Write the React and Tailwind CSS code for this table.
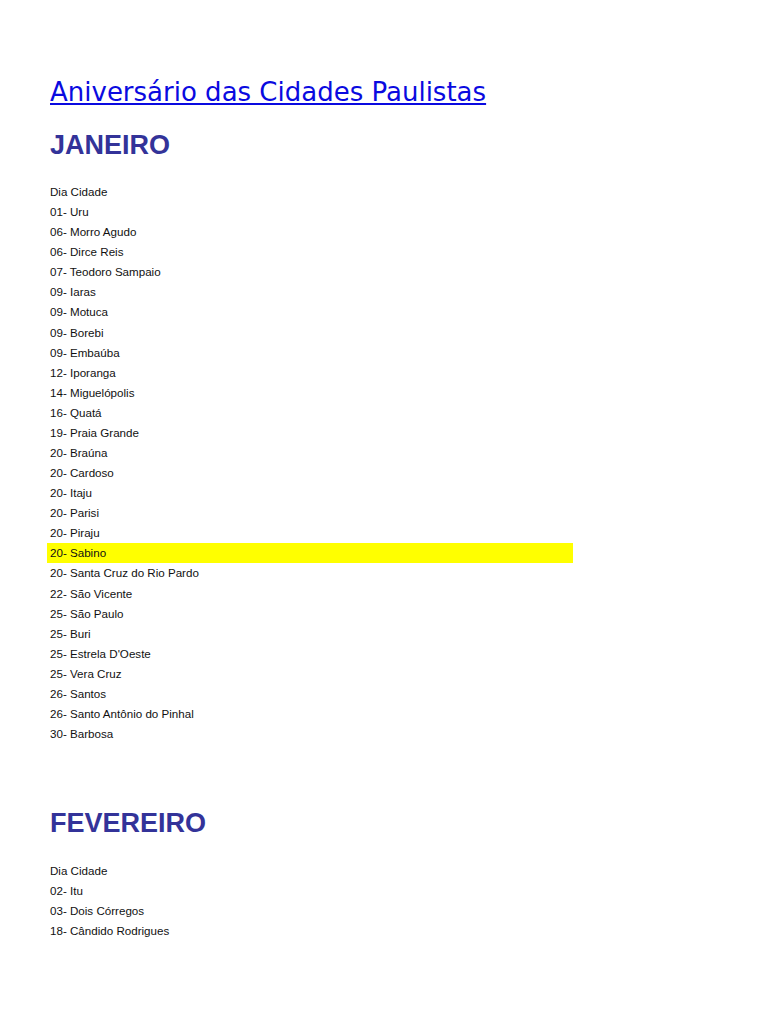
import React from "react";

const janeiro = [
  "01- Uru",
  "06- Morro Agudo",
  "06- Dirce Reis",
  "07- Teodoro Sampaio",
  "09- Iaras",
  "09- Motuca",
  "09- Borebi",
  "09- Embaúba",
  "12- Iporanga",
  "14- Miguelópolis",
  "16- Quatá",
  "19- Praia Grande",
  "20- Braúna",
  "20- Cardoso",
  "20- Itaju",
  "20- Parisi",
  "20- Piraju",
  "20- Sabino",
  "20- Santa Cruz do Rio Pardo",
  "22- São Vicente",
  "25- São Paulo",
  "25- Buri",
  "25- Estrela D'Oeste",
  "25- Vera Cruz",
  "26- Santos",
  "26- Santo Antônio do Pinhal",
  "30- Barbosa",
];

const fevereiro = ["02- Itu", "03- Dois Córregos", "18- Cândido Rodrigues"];

function CityList({ items, highlight }) {
  return (
    <div className="w-[526px] ml-[-3px]">
      {["Dia Cidade", ...items].map((c) => (
        <div
          key={c}
          className={
            "h-[20.08px] leading-[20px] pl-[3px] text-[11.6px] text-[#111] " +
            (c === highlight ? "bg-[#ffff00]" : "")
          }
        >
          {c}
        </div>
      ))}
    </div>
  );
}

export default function App() {
  return (
    <div className="w-[768px] h-[1024px] bg-white pl-[50px] pt-[76px] overflow-hidden font-['Liberation_Sans',Arial,sans-serif]">
      <a
        href="#"
        className="block w-fit text-[26px] leading-[32px] text-[#0a0ae0] underline font-['DejaVu_Sans',sans-serif]"
      >
        Aniversário das Cidades Paulistas
      </a>
      <h2 className="mt-[21px] text-[27px] leading-[32px] font-bold text-[#333399]">
        JANEIRO
      </h2>
      <div className="mt-[21px]">
        <CityList items={janeiro} highlight="20- Sabino" />
      </div>
      <h2 className="mt-[63px] text-[27px] leading-[32px] font-bold text-[#333399]">
        FEVEREIRO
      </h2>
      <div className="mt-[22px]">
        <CityList items={fevereiro} />
      </div>
    </div>
  );
}
